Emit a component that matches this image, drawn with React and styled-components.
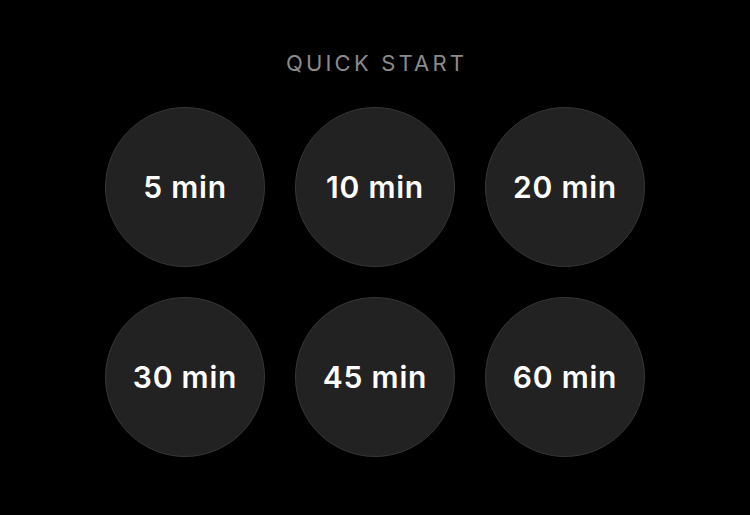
import React from "react";
import styled, { createGlobalStyle } from "styled-components";

const GlobalStyle = createGlobalStyle`
  html, body {
    margin: 0;
    padding: 0;
    background: #000;
  }
  body {
    font-family: Inter, "Noto Sans", "Liberation Sans", sans-serif;
    -webkit-font-smoothing: antialiased;
  }
`;

const Page = styled.div`
  width: 750px;
  height: 515px;
  background: #000;
  display: flex;
  flex-direction: column;
  align-items: center;
  padding-top: 50px;
  box-sizing: border-box;
`;

const Title = styled.h2`
  margin: 0;
  height: 26px;
  line-height: 26px;
  font-size: 22px;
  font-weight: 400;
  letter-spacing: 3.2px;
  padding-left: 3.2px;
  color: #8a8a8a;
  text-transform: uppercase;
`;

const Grid = styled.div`
  margin-top: 31px;
  display: grid;
  grid-template-columns: repeat(3, 160px);
  gap: 30px;
`;

const Preset = styled.button`
  width: 160px;
  height: 160px;
  border-radius: 50%;
  background: #222;
  border: 1px solid #363636;
  box-sizing: border-box;
  color: #fff;
  font-family: inherit;
  font-size: 30px;
  font-weight: 600;
  letter-spacing: 0.8px;
  display: flex;
  align-items: center;
  justify-content: center;
  cursor: pointer;
  padding: 0;
`;

const presets = [5, 10, 20, 30, 45, 60];

const App = () => {
  return (
    <>
      <GlobalStyle />
      <Page>
        <Title>Quick Start</Title>
        <Grid>
          {presets.map((m) => (
            <Preset key={m}>{m} min</Preset>
          ))}
        </Grid>
      </Page>
    </>
  );
};

export default App;
